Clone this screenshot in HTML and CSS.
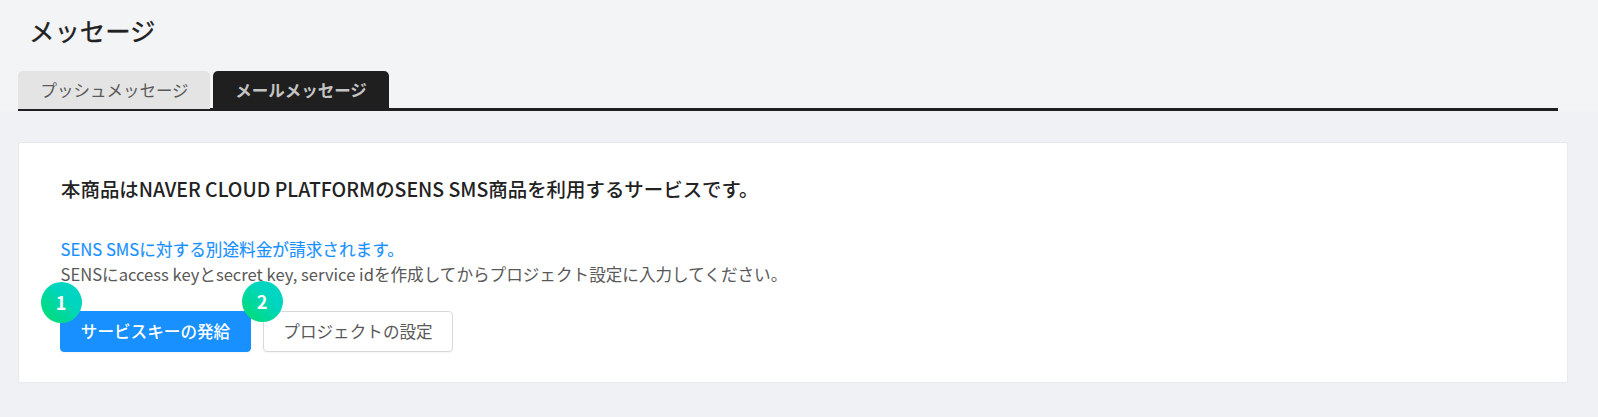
FILE: index.html
```html
<!DOCTYPE html>
<html lang="ja">
<head>
<meta charset="utf-8">
<title>メッセージ</title>
<link rel="stylesheet" href="styles.css">
</head>
<body>
<header class="header">
  <h1 class="title">メッセージ</h1>
  <nav class="tabs">
    <a class="tab">プッシュメッセージ</a>
    <a class="tab tab-active">メールメッセージ</a>
  </nav>
</header>
<main class="card">
  <h2 class="heading"><span>本商品はNAVER CLOUD PLATFORMのSENS SMS商品を利用するサービスです。</span></h2>
  <p class="line notice"><span>SENS SMSに対する別途料金が請求されます。</span></p>
  <p class="line"><span>SENSにaccess keyとsecret key, service idを作成してからプロジェクト設定に入力してください。</span></p>
  <div class="actions">
    <div class="action"><button class="button primary">サービスキーの発給</button><span class="badge badge-one">1</span></div>
    <div class="action"><button class="button secondary">プロジェクトの設定</button><span class="badge badge-two">2</span></div>
  </div>
</main>
</body>
</html>
```
FILE: styles.css
```css
* { box-sizing: border-box; }
html { background: #f0f1f5; }
body {
  margin: 0;
  height: 417px;
  overflow: hidden;
  font-family: "Noto Sans CJK JP", sans-serif;
  color: #595959;
  background: #f0f1f5;
}
.header {
  height: 111px;
  padding: 11px 40px 0 18px;
  background: #f3f4f6;
}
.title {
  margin: 0 0 20px;
  padding-left: 11px;
  height: 40px;
  line-height: 39px;
  font-size: 25.4px;
  font-weight: 400;
  -webkit-text-stroke: .35px #202020;
  color: #202020;
}
.tabs {
  display: flex;
  gap: 3px;
  height: 40px;
  border-bottom: 3px solid #1f1f1f;
}
.tab {
  height: 38px;
  width: 192px;
  padding-left: 1px;
  text-align: center;
  line-height: 39px;
  font-size: 16.5px;
  background: #e4e4e4;
  border-radius: 5px 5px 0 0;
}
.tab-active {
  width: 176px;
  height: 39px;
  padding-left: 0;
  font-weight: 700;
  color: #c4c4c4;
  background: #1f1f1f;
}
.card {
  width: 1550px;
  height: 241px;
  margin: 31px 0 0 18px;
  padding: 31px 41px 30px 42px;
  background: #fff;
  border: 1px solid #e8e9ea;
  border-radius: 2px;
}
.heading {
  margin: 0 0 33px;
  height: 30px;
  line-height: 30px;
  font-size: 19.45px;
  font-weight: 500;
  color: #222;
  white-space: nowrap;
}
.line {
  margin: 0 0 0 -0.5px;
  height: 25px;
  line-height: 25px;
  font-size: 16.6px;
  white-space: nowrap;
}
.notice {
  font-size: 16.65px;
  -webkit-text-stroke: .15px #1890ff;
  color: #1890ff;
}
.actions {
  display: flex;
  gap: 12px;
  margin: 24px 0 0 -1px;
}
.action { position: relative; }
.button {
  display: block;
  width: 191px;
  height: 41px;
  padding: 0;
  font: 400 16.6px/39px "Noto Sans CJK JP", sans-serif;
  color: #595959;
  background: #fff;
  border: 1px solid #d9d9d9;
  border-radius: 4px;
  box-shadow: 0 1px 1px rgba(0, 0, 0, .04);
}
.primary {
  font-weight: 500;
  color: #fff;
  background: #1890ff;
  border-color: #1890ff;
}
.secondary { width: 190px; }
.badge {
  position: absolute;
  left: -19px;
  top: -29px;
  width: 41px;
  height: 41px;
  padding-right: 1px;
  border-radius: 50%;
  text-align: center;
  font: 700 18px/40px "Noto Sans CJK JP", sans-serif;
  color: #fff;
  background: linear-gradient(45deg, #00dc78 10%, #00d5c2 65%);
}
.badge-two { left: -21px; top: -30px; }
```
